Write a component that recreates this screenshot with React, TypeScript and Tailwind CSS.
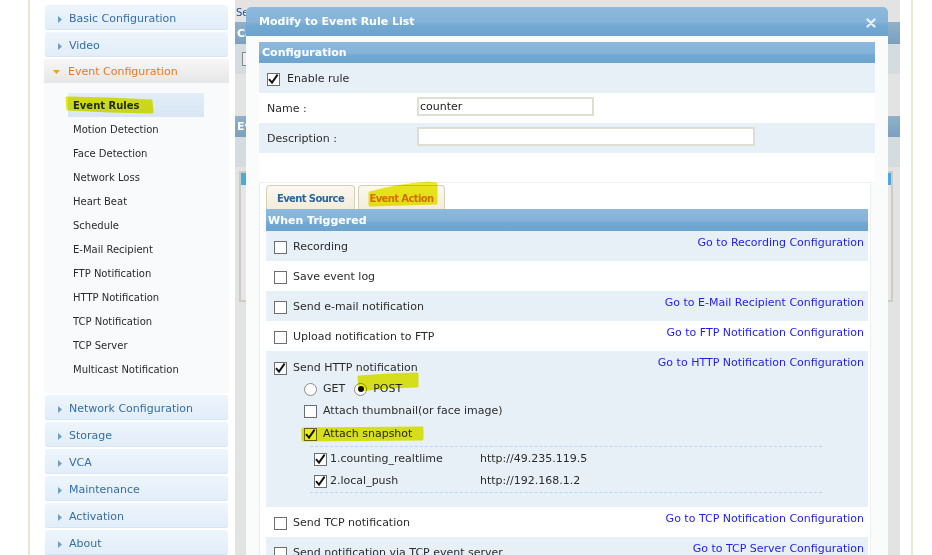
import React from "react";

const Check = ({ checked }: { checked?: boolean }) => (
  <span className="w-[13px] h-[13px] border border-[#6e6e6e] bg-white flex items-center justify-center shrink-0 overflow-visible">
    {checked && (
      <svg width="13" height="13" viewBox="0 0 13 13" className="overflow-visible">
        <path d="M2 6.2 L5 9.6 L10.6 1.6" fill="none" stroke="#111" strokeWidth="1.9" />
      </svg>
    )}
  </span>
);

const Radio = ({ checked }: { checked?: boolean }) => (
  <span className="w-[13px] h-[13px] rounded-full border border-[#8a8a8a] bg-white flex items-center justify-center shrink-0">
    {checked && <span className="w-[6px] h-[6px] rounded-full bg-[#111]" />}
  </span>
);

const MainItem = ({ label }: { label: string }) => (
  <div className="h-[25px] mx-px rounded-[3px] bg-gradient-to-b from-[#eef5fc] to-[#e1edf9] shadow-[inset_0_-1px_0_#d5e5f4] flex items-center pt-[3px] pl-[13px] text-[11px] text-[#336fa3]">
    <svg width="4" height="7" viewBox="0 0 4 7" className="mr-[7px] shrink-0">
      <path d="M0 0 L4 3.5 L0 7 Z" fill="#6d9fc7" />
    </svg>
    {label}
  </div>
);

const Sidebar = () => {
  const sub = [
    "Motion Detection",
    "Face Detection",
    "Network Loss",
    "Heart Beat",
    "Schedule",
    "E-Mail Recipient",
    "FTP Notification",
    "HTTP Notification",
    "TCP Notification",
    "TCP Server",
    "Multicast Notification",
  ];
  const lower = ["Network Configuration", "Storage", "VCA", "Maintenance", "Activation", "About"];
  return (
    <div className="w-[185px] shrink-0 pt-[5px] flex flex-col gap-[2px]">
      <MainItem label="Basic Configuration" />
      <MainItem label="Video" />
      <div className="flex flex-col">
        <div className="h-[24px] bg-gradient-to-b from-[#f7f7f7] to-[#e6e6e6] flex items-center pt-[2px] pl-[9px] text-[11px] text-[#e8791d]">
          <svg width="7" height="4" viewBox="0 0 7 4" className="mr-[8px] shrink-0">
            <path d="M0 0 L7 0 L3.5 4 Z" fill="#f2a01e" />
          </svg>
          Event Configuration
        </div>
        <div className="bg-[#f8fafc] pt-[10px] pb-[12px]">
          <div className="h-[24px] ml-[24px] w-[136px] bg-gradient-to-b from-[#e2edf8] to-[#d8e6f4] flex items-center pl-[5px] text-[10px] font-bold text-[#1d2f4a]">
            Event Rules
          </div>
          {sub.map((s) => (
            <div key={s} className="h-[24px] flex items-center pl-[29px] text-[10px] text-[#2a2a2a]">
              {s}
            </div>
          ))}
        </div>
      </div>
      {lower.map((l) => (
        <MainItem key={l} label={l} />
      ))}
    </div>
  );
};

const Backdrop = () => (
  <div className="w-[665px] shrink-0 bg-[#e3e3e3] flex flex-col">
    <div className="h-[22px] pl-[1px] pt-[7px] text-[10px] leading-[12px] text-[#1f4f9a]">Setup</div>
    <div className="h-[22px] bg-gradient-to-b from-[#8fb0ca] to-[#7ba1bf] text-white font-bold text-[11px] pl-[2px] pt-[2px] flex items-center">
      Camera
    </div>
    <div className="h-[30px] bg-[#d4dcdf] pl-[7px] pt-[8px]">
      <div className="w-[10px] h-[14px] border border-[#888] bg-[#ececec]" />
    </div>
    <div className="h-[42px]" />
    <div className="h-[21px] bg-gradient-to-b from-[#8fb0ca] to-[#7ba1bf] text-white font-bold text-[11px] pl-[2px] pt-[2px] flex items-center">
      Event
    </div>
    <div className="h-[30px] bg-[#d4dcdf]" />
    <div className="h-[4px]" />
    <div className="h-[131px] ml-[4px] mr-[7px] border-2 border-[#cdccc4] bg-[#e6e6e6] flex justify-between">
      <div className="w-[5px] h-[12px] bg-[#4ba7dd]" />
      <div className="w-[3px] h-[12px] bg-[#4ba7dd]" />
    </div>
  </div>
);

const headerBg =
  "bg-[linear-gradient(to_bottom,#8cb9dc_0%,#85b3d9_52%,#72a9d2_62%,#6ca4cf_100%)]";

type Row = { label: string; link?: string; light: boolean };

const SimpleRow = ({ label, link, light }: Row) => (
  <div className={`h-[30px] flex justify-between pl-[8px] pr-[4px] ${light ? "bg-[#e8f0f7]" : "bg-white"}`}>
    <div className="h-[30px] pt-[3px] flex items-center gap-[6px] text-[#2b2b2b] whitespace-nowrap">
      <Check />
      <span>{label}</span>
    </div>
    {link && <span className="pt-[5px] leading-[14px] text-[#1e1ee6] whitespace-nowrap">{link}</span>}
  </div>
);

const HttpRow = () => (
  <div className="h-[156px] flex justify-between pl-[8px] pr-[4px] bg-[#e8f0f7] text-[#2b2b2b]">
    <div className="flex flex-col flex-1 min-w-0 whitespace-nowrap">
      <div className="h-[20px] mt-[7px] flex items-center gap-[6px]">
        <Check checked />
        <span>Send HTTP notification</span>
      </div>
      <div className="h-[20px] mt-[1px] ml-[30px] flex items-center">
        <Radio />
        <span className="ml-[6px]">GET</span>
        <span className="ml-[9px]">
          <Radio checked />
        </span>
        <span className="ml-[6px]">POST</span>
      </div>
      <div className="h-[20px] mt-[2px] ml-[30px] flex items-center gap-[6px]">
        <Check />
        <span>Attach thumbnail(or face image)</span>
      </div>
      <div className="h-[20px] mt-[3px] ml-[30px] flex items-center gap-[6px]">
        <Check checked />
        <span>Attach snapshot</span>
      </div>
      <div className="mt-[2px] ml-[36px] w-[512px] shrink-0 border-t border-dashed border-[#bcd5f1]" />
      <div className="ml-[40px] h-[20px] mt-[2px] flex items-center">
        <Check checked />
        <span className="ml-[3px] w-[150px]">1.counting_realtlime</span>
        <span>http://49.235.119.5</span>
      </div>
      <div className="ml-[40px] h-[20px] mt-[2px] flex items-center">
        <Check checked />
        <span className="ml-[3px] w-[150px]">2.local_push</span>
        <span>http://192.168.1.2</span>
      </div>
      <div className="mt-[1px] ml-[36px] w-[512px] shrink-0 border-t border-dashed border-[#bcd5f1]" />
    </div>
    <span className="pt-[5px] leading-[14px] text-[#1e1ee6] whitespace-nowrap shrink-0">
      Go to HTTP Notification Configuration
    </span>
  </div>
);

const Modal = () => (
  <div className="absolute left-[246px] top-[7px] w-[642px] h-[560px] bg-[#fafcfc] rounded-t-[5px] flex flex-col text-[11px]">
    <div className={`h-[29px] shrink-0 rounded-t-[5px] ${headerBg} flex items-center justify-between pt-[2px] pl-[13px] pr-[12px]`}>
      <span className="text-white font-bold text-[11px]">Modify to Event Rule List</span>
      <svg width="10" height="10" viewBox="0 0 10 10">
        <path d="M1.5 1.5 L8.5 8.5 M8.5 1.5 L1.5 8.5" stroke="#e6eff8" strokeWidth="2.4" strokeLinecap="round" />
      </svg>
    </div>
    <div className="px-[13px] pt-[6px]">
      <div className="bg-white">
        <div className={`h-[21px] ${headerBg} pl-[3px] pt-[2px] flex items-center text-white font-bold`}>Configuration</div>
        <div className="h-[30px] bg-[#e8f0f7] flex items-center pt-[2px] pl-[8px] gap-[7px] text-[#2b2b2b]">
          <Check checked />
          <span>Enable rule</span>
        </div>
        <div className="h-[30px] flex pl-[8px] text-[#2b2b2b]">
          <span className="w-[150px] self-center pt-[2px]">Name :</span>
          <div className="mt-[4px] w-[177px] h-[19px] border-2 border-[#dddfd2] bg-white pl-[1px] leading-[16px] text-[#222]">
            counter
          </div>
        </div>
        <div className="h-[30px] bg-[#e8f0f7] flex pl-[8px] text-[#2b2b2b]">
          <span className="w-[150px] self-center pt-[2px]">Description :</span>
          <div className="mt-[4px] w-[338px] h-[19px] border-2 border-[#dddfd2] bg-white" />
        </div>
        <div className="h-[29px]" />
      </div>
      <div className="w-[612px] h-[400px] bg-white border border-[#eef0f0] pt-[2px] pl-[6px] pr-[2px]">
        <div className="flex gap-[3px] h-[24px]">
          <div className="w-[89px] h-[24px] rounded-t-[4px] border border-b-0 border-[#d8cfb9] bg-gradient-to-b from-[#fbf8f0] to-[#f3ecda] flex items-center justify-center pt-[1px] text-[10px] font-bold tracking-[-0.6px] text-[#2c6698]">
            Event Source
          </div>
          <div className="w-[87px] h-[24px] rounded-t-[4px] border border-b-0 border-[#d8cfb9] bg-gradient-to-b from-[#fbf8f0] to-[#f3ecda] flex items-center justify-center pt-[1px] text-[10px] font-bold tracking-[-0.6px] text-[#e5761c]">
            Event Action
          </div>
        </div>
        <div className={`h-[22px] ${headerBg} pl-[2px] pt-[2px] flex items-center text-white font-bold`}>When Triggered</div>
        <SimpleRow label="Recording" link="Go to Recording Configuration" light />
        <SimpleRow label="Save event log" light={false} />
        <SimpleRow label="Send e-mail notification" link="Go to E-Mail Recipient Configuration" light />
        <SimpleRow label="Upload notification to FTP" link="Go to FTP Notification Configuration" light={false} />
        <HttpRow />
        <SimpleRow label="Send TCP notification" link="Go to TCP Notification Configuration" light={false} />
        <SimpleRow label="Send notification via TCP event server" link="Go to TCP Server Configuration" light />
      </div>
    </div>
  </div>
);

const Highlights = () => (
  <svg
    className="absolute left-0 top-0 pointer-events-none mix-blend-multiply"
    width="932"
    height="555"
    viewBox="0 0 932 555"
  >
    <g fill="#ecec1c" stroke="#ecec1c" strokeWidth="3" strokeLinejoin="round">
      <path d="M67 98 L110 99 L151 101 L152 112 L110 111 L68 109 Z" />
      <path d="M370 193 Q398 185 428 183 L436 184 L436 203 L370 205 Z" />
      <path d="M359 377 L388 375 L417 374 L417 386 L388 387 L360 390 Z" />
      <path d="M303 429 L422 428 L422 439 L303 440 Z" />
    </g>
  </svg>
);

export default function App() {
  return (
    <div className="relative w-[932px] h-[555px] overflow-hidden bg-white flex font-['DejaVu_Sans',sans-serif]">
      <div className="w-[28px] shrink-0" />
      <div className="w-[2px] shrink-0 bg-[#ebe7d3]" />
      <div className="w-[14px] shrink-0" />
      <Sidebar />
      <div className="w-[6px] shrink-0" />
      <Backdrop />
      <div className="w-[11px] shrink-0" />
      <div className="w-[2px] shrink-0 bg-[#ebe7d3]" />
      <div className="flex-1" />
      <Modal />
      <Highlights />
    </div>
  );
}
